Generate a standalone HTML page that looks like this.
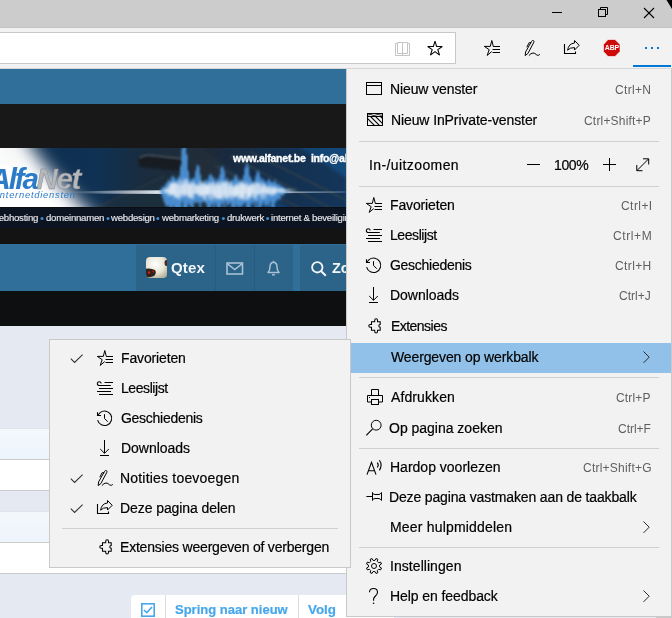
<!DOCTYPE html>
<html><head><meta charset="utf-8">
<style>
*{box-sizing:border-box}
html,body{margin:0;padding:0}
body{width:672px;height:618px;overflow:hidden;position:relative;background:#e4e9f2;font-family:"Liberation Sans",sans-serif}
.a{position:absolute}
.mt{position:absolute;font-size:14px;color:#1b1b1b;white-space:nowrap;line-height:16px;will-change:transform;-webkit-text-stroke:0.2px currentColor}
.sc{position:absolute;font-size:12px;color:#5f5f5f;white-space:nowrap;line-height:14px;will-change:transform}
.a{will-change:auto}
.t{will-change:transform}
svg{position:absolute;overflow:visible}
</style></head><body>
<div class="a" style="left:0;top:0;width:672px;height:27px;background:#cccccc"></div>
<div class="a" style="left:0;top:27px;width:672px;height:1px;background:#c4c4c4"></div>
<svg style="left:0;top:0" width="672" height="28">
  <polygon points="666.5,0 672,0 672,9" fill="#000"/>
  <line x1="552" y1="12.5" x2="562" y2="12.5" stroke="#000" stroke-width="1"/>
  <rect x="598.5" y="9.5" width="7" height="7" fill="none" stroke="#000" stroke-width="1"/>
  <polyline points="600.5,9.5 600.5,7.5 607.5,7.5 607.5,14.5 605.5,14.5" fill="none" stroke="#000" stroke-width="1"/>
  <line x1="644" y1="8" x2="654" y2="18" stroke="#000" stroke-width="1.1"/>
  <line x1="654" y1="8" x2="644" y2="18" stroke="#000" stroke-width="1.1"/>
</svg>
<div class="a" style="left:0;top:28px;width:672px;height:41px;background:#f2f2f2"></div>
<div class="a" style="left:0;top:68px;width:672px;height:1px;background:#d6d6d6"></div>
<div class="a" style="left:-2px;top:32px;width:458px;height:32px;background:#fff;border:1px solid #c8c8c8"></div>
<div class="a" style="left:633px;top:65px;width:38px;height:2px;background:#0078d7"></div>
<svg style="left:0;top:28px" width="672" height="41">
<g fill="none" stroke="#c4c4c4" stroke-width="1"><path d="M395.5,15.5 V27.5 H409.5 V15.5 H407.5 M395.5,15.5 H397.5"/><path d="M397.5,25.5 V14.5 H402.5 V27.5 M402.5,14.5 H407.5 V25.5 H397.5"/></g>
<path d="M435,13.2 L436.6,18.5 L442.3,18.5 L437.8,21.6 L439.6,27.1 L435,23.7 L430.4,27.1 L432.2,21.6 L427.7,18.5 L433.4,18.5 Z" fill="none" stroke="#000" stroke-width="1.05" stroke-miterlimit="3"/>
</svg>
<svg style="left:484px;top:40px" width="16" height="16"><path d="M7.8,0.5 L6.3,6.4 L0.3,6.4 L5.2,9.7 L3.2,15.4 L7.7,11.6 M7.8,0.5 L9.3,6.4" fill="none" stroke="#000" stroke-width="1" stroke-linejoin="miter"/>
<path d="M9.2,6.5 H16 M8.5,9.5 H16 M8.5,12.5 H16" stroke="#000" stroke-width="1"/></svg>
<svg style="left:524px;top:40px" width="16" height="16"><path d="M1.2,15.6 L1.6,11.9 L7.6,1.3 Q8.6,-0.2 9.7,0.8 Q10.4,1.7 9.6,2.8 L3.8,13.6 Z" fill="none" stroke="#000" stroke-width="1"/>
<path d="M2.8,7.2 L5.2,2.6 L7.2,2.9" fill="none" stroke="#000" stroke-width="1"/>
<path d="M4.9,15.6 Q7,13 9,13 Q11,13 12.5,14.8 Q14.5,16.2 15.8,14.4" fill="none" stroke="#000" stroke-width="1"/></svg>
<svg style="left:564px;top:40px" width="16" height="16"><path d="M0.5,4 V13.5 H11.5 V11.5" fill="none" stroke="#000" stroke-width="1.1"/>
<path d="M10.5,0.5 L15.2,5.3 L10.5,10 V7.6 Q6,7.4 3.6,10.2 Q4.6,3.5 10.5,3 Z" fill="none" stroke="#000" stroke-width="1" stroke-linejoin="miter"/></svg>
<svg style="left:603px;top:39px;will-change:transform" width="18" height="18">
<polygon points="5,0.5 12,0.5 17,5.5 17,12.5 12,17.5 5,17.5 0.5,12.5 0.5,5.5" fill="#cf0a0a" stroke="#fff" stroke-width="0.6"/>
<text x="8.9" y="11.1" font-family="Liberation Sans" font-weight="bold" font-size="7" letter-spacing="-0.2" fill="#fff" text-anchor="middle">ABP</text>
</svg>
<svg style="left:640px;top:44px" width="24" height="8">
<rect x="5" y="3" width="2" height="2" fill="#0078d7"/><rect x="11" y="3" width="2" height="2" fill="#0078d7"/><rect x="17" y="3" width="2" height="2" fill="#0078d7"/>
</svg>
<div class="a" style="left:0;top:69px;width:346px;height:35px;background:#2f6f99"></div>
<div class="a" style="left:0;top:104px;width:346px;height:44px;background:#181818"></div>
<svg style="left:0;top:148px;overflow:hidden;will-change:transform" width="346" height="60">
<defs>
<linearGradient id="bg1" x1="0" x2="1" y1="0" y2="0">
<stop offset="0" stop-color="#0c2c4e"/><stop offset="0.28" stop-color="#0f3153"/><stop offset="0.42" stop-color="#1a2c3e"/><stop offset="0.6" stop-color="#222d38"/><stop offset="0.8" stop-color="#123d66"/><stop offset="1" stop-color="#134a7c"/>
</linearGradient>
<filter id="bl4" x="-50%" y="-50%" width="200%" height="200%"><feGaussianBlur stdDeviation="9"/></filter>
<filter id="bl2" x="-50%" y="-50%" width="200%" height="200%"><feGaussianBlur stdDeviation="1.6"/></filter>
<filter id="bl1" x="-50%" y="-50%" width="200%" height="200%"><feGaussianBlur stdDeviation="0.8"/></filter>
<filter id="blh" x="-50%" y="-50%" width="200%" height="200%"><feGaussianBlur stdDeviation="2.5 0.6"/></filter><filter id="wb" x="-20%" y="-50%" width="140%" height="200%"><feGaussianBlur stdDeviation="1.3 1.8"/></filter><filter id="ww" x="-20%" y="-50%" width="140%" height="200%"><feGaussianBlur stdDeviation="1.6 1.5"/></filter>
</defs>
<rect width="346" height="60" fill="url(#bg1)"/>
<!-- dark device shapes -->
<g filter="url(#bl1)">
<path d="M92,60 L160,27 L215,28 L215,60 Z" fill="#1f2c3a" opacity="0.7"/><path d="M100,58 L165,28" stroke="#3b4858" stroke-width="1" opacity="0.6"/>
<path d="M138,13 Q138,7 146,6.5 L186,10 L190,24 L146,19.5 Q138,19 138,13 Z" fill="#181d23"/>
<path d="M139.5,10 Q143,6.5 152,7.3 L186,11" stroke="#4b5663" stroke-width="1.3" fill="none"/>
<path d="M205,0 L300,0 L346,30 L346,60 L290,60 L240,30 Z" fill="#1a2635" opacity="0.5"/>
<path d="M230,8 L330,60 M250,4 L346,52 M215,18 L300,60" stroke="#34404d" stroke-width="2" fill="none" opacity="0.6"/>
</g>
<!-- glow at left -->
<g filter="url(#bl4)">
<path d="M-30,-20 L20,-20 Q38,18 108,82 L-30,82 Z" fill="#ffffff"/>
</g>
<rect x="0" y="0" width="20" height="12" fill="#c8ccd2" opacity="0.35" filter="url(#bl4)"/>
<!-- white streak -->
<linearGradient id="stg" x1="70" x2="346" y1="0" y2="0" gradientUnits="userSpaceOnUse"><stop offset="0" stop-color="#dfe6ee" stop-opacity="0"/><stop offset="0.12" stop-color="#dfe6ee" stop-opacity="0.45"/><stop offset="0.32" stop-color="#e8edf2" stop-opacity="0.95"/><stop offset="0.75" stop-color="#dfe6ee" stop-opacity="0.7"/><stop offset="1" stop-color="#c9d6e3" stop-opacity="0.4"/></linearGradient>
<g filter="url(#blh)">
<path d="M70,43.5 Q160,41.5 240,43 Q300,43.6 346,43.6 L346,44.6 Q300,44.8 240,45.5 Q160,46.5 70,45 Z" fill="url(#stg)"/>
</g>
<g filter="url(#wb)" fill="#4c93da"><rect x="159.0" y="42.3" width="1.6" height="0.6"/><rect x="160.5" y="41.1" width="1.6" height="4.5"/><rect x="162.0" y="38.8" width="1.6" height="11.1"/><rect x="163.5" y="38.9" width="1.6" height="15.2"/><rect x="165.0" y="36.1" width="1.6" height="21.8"/><rect x="166.5" y="34.4" width="1.6" height="23.8"/><rect x="168.0" y="31.7" width="1.6" height="26.2"/><rect x="169.5" y="33.3" width="1.6" height="28.6"/><rect x="171.0" y="28.9" width="1.6" height="33.9"/><rect x="172.5" y="28.1" width="1.6" height="29.7"/><rect x="174.0" y="30.2" width="1.6" height="30.3"/><rect x="175.5" y="32.4" width="1.6" height="28.4"/><rect x="177.0" y="30.6" width="1.6" height="32.9"/><rect x="178.5" y="28.2" width="1.6" height="32.0"/><rect x="180.0" y="17.9" width="1.6" height="42.6"/><rect x="181.5" y="0.4" width="1.6" height="53.5"/><rect x="183.0" y="-14.1" width="1.6" height="76.8"/><rect x="184.5" y="-11.5" width="1.6" height="73.7"/><rect x="186.0" y="6.4" width="1.6" height="56.4"/><rect x="187.5" y="22.7" width="1.6" height="33.1"/><rect x="189.0" y="31.7" width="1.6" height="26.2"/><rect x="190.5" y="31.7" width="1.6" height="27.2"/><rect x="192.0" y="30.2" width="1.6" height="31.5"/><rect x="193.5" y="29.8" width="1.6" height="24.6"/><rect x="195.0" y="22.6" width="1.6" height="32.5"/><rect x="196.5" y="17.1" width="1.6" height="37.3"/><rect x="198.0" y="18.1" width="1.6" height="36.8"/><rect x="199.5" y="26.5" width="1.6" height="36.0"/><rect x="201.0" y="34.5" width="1.6" height="20.0"/><rect x="202.5" y="35.4" width="1.6" height="18.2"/><rect x="204.0" y="32.7" width="1.6" height="20.9"/><rect x="205.5" y="31.6" width="1.6" height="24.5"/><rect x="207.0" y="32.8" width="1.6" height="28.9"/><rect x="208.5" y="27.4" width="1.6" height="35.1"/><rect x="210.0" y="26.0" width="1.6" height="32.9"/><rect x="211.5" y="28.4" width="1.6" height="27.7"/><rect x="213.0" y="29.9" width="1.6" height="34.0"/><rect x="214.5" y="34.9" width="1.6" height="20.5"/><rect x="216.0" y="30.6" width="1.6" height="27.9"/><rect x="217.5" y="31.9" width="1.6" height="31.2"/><rect x="219.0" y="27.1" width="1.6" height="34.7"/><rect x="220.5" y="19.5" width="1.6" height="38.1"/><rect x="222.0" y="18.6" width="1.6" height="36.4"/><rect x="223.5" y="23.4" width="1.6" height="40.4"/><rect x="225.0" y="32.5" width="1.6" height="21.0"/><rect x="226.5" y="30.0" width="1.6" height="28.0"/><rect x="228.0" y="34.7" width="1.6" height="21.7"/><rect x="229.5" y="33.6" width="1.6" height="21.1"/><rect x="231.0" y="32.4" width="1.6" height="30.6"/><rect x="232.5" y="32.1" width="1.6" height="26.9"/><rect x="234.0" y="28.4" width="1.6" height="33.6"/><rect x="235.5" y="26.8" width="1.6" height="30.0"/><rect x="237.0" y="30.9" width="1.6" height="28.4"/><rect x="238.5" y="32.9" width="1.6" height="26.4"/><rect x="240.0" y="32.2" width="1.6" height="26.5"/><rect x="241.5" y="32.8" width="1.6" height="25.7"/><rect x="243.0" y="27.2" width="1.6" height="28.9"/><rect x="244.5" y="19.4" width="1.6" height="35.2"/><rect x="246.0" y="15.2" width="1.6" height="45.3"/><rect x="247.5" y="18.6" width="1.6" height="41.9"/><rect x="249.0" y="28.2" width="1.6" height="35.4"/><rect x="250.5" y="30.7" width="1.6" height="24.4"/><rect x="252.0" y="35.1" width="1.6" height="21.6"/><rect x="253.5" y="33.4" width="1.6" height="20.1"/><rect x="255.0" y="28.1" width="1.6" height="35.8"/><rect x="256.5" y="23.3" width="1.6" height="30.4"/><rect x="258.0" y="24.1" width="1.6" height="39.1"/><rect x="259.5" y="29.1" width="1.6" height="30.4"/><rect x="261.0" y="31.7" width="1.6" height="26.2"/><rect x="262.5" y="30.9" width="1.6" height="23.3"/><rect x="264.0" y="33.3" width="1.6" height="23.6"/><rect x="265.5" y="35.0" width="1.6" height="24.0"/><rect x="267.0" y="32.0" width="1.6" height="23.5"/><rect x="268.5" y="31.1" width="1.6" height="27.6"/><rect x="270.0" y="33.9" width="1.6" height="19.3"/><rect x="271.5" y="33.8" width="1.6" height="28.2"/><rect x="273.0" y="34.3" width="1.6" height="25.4"/><rect x="274.5" y="32.3" width="1.6" height="21.6"/><rect x="276.0" y="36.3" width="1.6" height="16.4"/><rect x="277.5" y="35.8" width="1.6" height="14.9"/><rect x="279.0" y="36.5" width="1.6" height="15.1"/><rect x="280.5" y="38.8" width="1.6" height="8.7"/><rect x="282.0" y="38.7" width="1.6" height="8.9"/><rect x="283.5" y="40.7" width="1.6" height="4.1"/><rect x="285.0" y="41.5" width="1.6" height="3.1"/><rect x="286.5" y="41.9" width="1.6" height="1.4"/><rect x="288.0" y="42.3" width="1.6" height="0.6"/></g><g filter="url(#ww)" fill="#eef2f7"><rect x="162.0" y="42.0" width="1.6" height="0.9" opacity="0.99"/><rect x="163.5" y="41.4" width="1.6" height="1.9" opacity="0.78"/><rect x="165.0" y="40.8" width="1.6" height="4.4" opacity="0.91"/><rect x="166.5" y="40.3" width="1.6" height="4.1" opacity="0.80"/><rect x="168.0" y="38.5" width="1.6" height="9.2" opacity="0.86"/><rect x="169.5" y="35.7" width="1.6" height="11.0" opacity="0.89"/><rect x="171.0" y="34.8" width="1.6" height="12.6" opacity="1.00"/><rect x="172.5" y="34.5" width="1.6" height="12.1" opacity="0.87"/><rect x="174.0" y="34.4" width="1.6" height="15.1" opacity="0.97"/><rect x="175.5" y="35.3" width="1.6" height="14.2" opacity="0.86"/><rect x="177.0" y="35.9" width="1.6" height="14.3" opacity="0.77"/><rect x="178.5" y="32.3" width="1.6" height="19.0" opacity="0.82"/><rect x="180.0" y="37.3" width="1.6" height="11.4" opacity="0.79"/><rect x="181.5" y="32.0" width="1.6" height="14.4" opacity="0.81"/><rect x="183.0" y="35.6" width="1.6" height="13.1" opacity="0.89"/><rect x="184.5" y="31.0" width="1.6" height="16.5" opacity="0.85"/><rect x="186.0" y="31.1" width="1.6" height="15.4" opacity="0.79"/><rect x="187.5" y="34.9" width="1.6" height="14.8" opacity="0.82"/><rect x="189.0" y="36.2" width="1.6" height="13.2" opacity="0.99"/><rect x="190.5" y="35.1" width="1.6" height="15.1" opacity="0.76"/><rect x="192.0" y="33.7" width="1.6" height="17.4" opacity="0.85"/><rect x="193.5" y="35.2" width="1.6" height="10.8" opacity="0.77"/><rect x="195.0" y="37.0" width="1.6" height="8.9" opacity="0.75"/><rect x="196.5" y="36.8" width="1.6" height="8.9" opacity="0.97"/><rect x="198.0" y="37.5" width="1.6" height="10.4" opacity="0.84"/><rect x="199.5" y="33.0" width="1.6" height="15.7" opacity="0.87"/><rect x="201.0" y="36.9" width="1.6" height="10.4" opacity="0.96"/><rect x="202.5" y="33.3" width="1.6" height="15.9" opacity="0.79"/><rect x="204.0" y="35.8" width="1.6" height="16.5" opacity="0.97"/><rect x="205.5" y="36.8" width="1.6" height="9.9" opacity="0.94"/><rect x="207.0" y="37.0" width="1.6" height="10.0" opacity="0.95"/><rect x="208.5" y="34.2" width="1.6" height="17.1" opacity="0.93"/><rect x="210.0" y="36.9" width="1.6" height="8.8" opacity="0.76"/><rect x="211.5" y="34.8" width="1.6" height="17.4" opacity="0.86"/><rect x="213.0" y="33.3" width="1.6" height="14.8" opacity="0.81"/><rect x="214.5" y="37.8" width="1.6" height="12.1" opacity="0.98"/><rect x="216.0" y="35.1" width="1.6" height="16.0" opacity="0.77"/><rect x="217.5" y="34.3" width="1.6" height="16.4" opacity="0.87"/><rect x="219.0" y="37.0" width="1.6" height="14.1" opacity="0.99"/><rect x="220.5" y="33.3" width="1.6" height="17.3" opacity="0.79"/><rect x="222.0" y="33.6" width="1.6" height="17.6" opacity="0.79"/><rect x="223.5" y="35.1" width="1.6" height="12.9" opacity="0.89"/><rect x="225.0" y="33.2" width="1.6" height="16.9" opacity="0.88"/><rect x="226.5" y="33.8" width="1.6" height="17.5" opacity="0.80"/><rect x="228.0" y="37.6" width="1.6" height="12.0" opacity="0.81"/><rect x="229.5" y="33.5" width="1.6" height="14.4" opacity="0.86"/><rect x="231.0" y="36.5" width="1.6" height="15.4" opacity="0.88"/><rect x="232.5" y="38.9" width="1.6" height="9.7" opacity="0.80"/><rect x="234.0" y="38.0" width="1.6" height="10.8" opacity="0.93"/><rect x="235.5" y="35.9" width="1.6" height="13.5" opacity="0.95"/><rect x="237.0" y="37.5" width="1.6" height="9.9" opacity="0.94"/><rect x="238.5" y="34.4" width="1.6" height="17.4" opacity="0.86"/><rect x="240.0" y="35.9" width="1.6" height="14.4" opacity="0.86"/><rect x="241.5" y="33.4" width="1.6" height="17.0" opacity="0.97"/><rect x="243.0" y="35.6" width="1.6" height="16.5" opacity="0.96"/><rect x="244.5" y="36.3" width="1.6" height="9.7" opacity="0.81"/><rect x="246.0" y="34.3" width="1.6" height="17.5" opacity="0.79"/><rect x="247.5" y="38.1" width="1.6" height="13.5" opacity="0.99"/><rect x="249.0" y="36.6" width="1.6" height="12.3" opacity="1.00"/><rect x="250.5" y="36.4" width="1.6" height="12.7" opacity="0.83"/><rect x="252.0" y="34.7" width="1.6" height="10.9" opacity="0.89"/><rect x="253.5" y="37.1" width="1.6" height="12.7" opacity="0.88"/><rect x="255.0" y="34.5" width="1.6" height="17.5" opacity="0.78"/><rect x="256.5" y="34.7" width="1.6" height="12.5" opacity="0.78"/><rect x="258.0" y="34.7" width="1.6" height="12.3" opacity="0.79"/><rect x="259.5" y="35.5" width="1.6" height="10.3" opacity="0.76"/><rect x="261.0" y="39.1" width="1.6" height="11.8" opacity="0.91"/><rect x="262.5" y="35.2" width="1.6" height="10.2" opacity="0.97"/><rect x="264.0" y="37.0" width="1.6" height="13.2" opacity="0.82"/><rect x="265.5" y="38.7" width="1.6" height="6.7" opacity="0.79"/><rect x="267.0" y="38.6" width="1.6" height="7.7" opacity="0.94"/><rect x="268.5" y="39.3" width="1.6" height="6.9" opacity="0.75"/><rect x="270.0" y="37.4" width="1.6" height="9.6" opacity="0.80"/><rect x="271.5" y="40.0" width="1.6" height="7.8" opacity="0.86"/><rect x="273.0" y="39.2" width="1.6" height="6.9" opacity="0.92"/><rect x="274.5" y="38.1" width="1.6" height="8.5" opacity="0.91"/><rect x="276.0" y="40.7" width="1.6" height="3.6" opacity="0.77"/><rect x="277.5" y="40.6" width="1.6" height="3.4" opacity="0.96"/><rect x="279.0" y="40.5" width="1.6" height="3.8" opacity="0.82"/><rect x="280.5" y="40.4" width="1.6" height="3.7" opacity="0.99"/><rect x="282.0" y="41.0" width="1.6" height="4.4" opacity="0.83"/><rect x="283.5" y="41.0" width="1.6" height="3.1" opacity="0.88"/><rect x="285.0" y="41.7" width="1.6" height="1.8" opacity="0.77"/><rect x="286.5" y="41.8" width="1.6" height="1.6" opacity="0.81"/><rect x="288.0" y="41.3" width="1.6" height="2.3" opacity="0.93"/><rect x="289.5" y="41.9" width="1.6" height="1.7" opacity="0.79"/><rect x="291.0" y="42.2" width="1.6" height="1.1" opacity="0.97"/><rect x="292.5" y="42.0" width="1.6" height="0.8" opacity="0.88"/><rect x="294.0" y="42.2" width="1.6" height="0.7" opacity="0.90"/></g>
<!-- logo -->
<text x="-10.5" y="41" font-family="Liberation Sans" font-weight="bold" font-style="italic" font-size="29.5" letter-spacing="-2.1" fill="#2b7bc9">Alfa</text><text x="36.5" y="41" font-family="Liberation Sans" font-weight="bold" font-style="italic" font-size="29.5" letter-spacing="-1.3" fill="#b5b7ba" stroke="#7d8088" stroke-width="0.4">Net</text>
<text x="-3" y="49.6" font-family="Liberation Sans" font-style="italic" font-size="9.4" letter-spacing="0.75" fill="#2b7bc9">internetdiensten</text>
<text x="233" y="13.8" font-family="Liberation Sans" font-weight="bold" font-size="10.5" letter-spacing="-0.25" fill="#fff" stroke="#fff" stroke-width="0.35" xml:space="preserve">www.alfanet.be  info@alfanet.be</text>
<rect y="59" width="346" height="1" fill="#0a0d12"/>
</svg>
<div class="a" style="left:0;top:208px;width:346px;height:20px;background:#0c1422"></div>
<div class="a" style="left:0;top:228px;width:346px;height:16px;background:#131313"></div>
<div class="a" style="left:0;top:244px;width:346px;height:47px;background:#2f6f99"></div>
<div class="a" style="left:0;top:291px;width:346px;height:35px;background:#0e0f11"></div>
<div class="a" style="left:-7.8px;top:212px;font-size:9.6px;letter-spacing:-0.24px;line-height:12px;color:#e6e8ea;white-space:nowrap;will-change:transform;-webkit-text-stroke:0.15px currentColor">webhosting</div>
<div class="a" style="left:46px;top:212px;font-size:9.6px;letter-spacing:-0.24px;line-height:12px;color:#e6e8ea;white-space:nowrap;will-change:transform;-webkit-text-stroke:0.15px currentColor">domeinnamen</div>
<div class="a" style="left:111px;top:212px;font-size:9.6px;letter-spacing:-0.24px;line-height:12px;color:#e6e8ea;white-space:nowrap;will-change:transform;-webkit-text-stroke:0.15px currentColor">webdesign</div>
<div class="a" style="left:162.2px;top:212px;font-size:9.6px;letter-spacing:-0.24px;line-height:12px;color:#e6e8ea;white-space:nowrap;will-change:transform;-webkit-text-stroke:0.15px currentColor">webmarketing</div>
<div class="a" style="left:227px;top:212px;font-size:9.6px;letter-spacing:-0.24px;line-height:12px;color:#e6e8ea;white-space:nowrap;will-change:transform;-webkit-text-stroke:0.15px currentColor">drukwerk</div>
<div class="a" style="left:271.3px;top:212px;font-size:9.6px;letter-spacing:-0.24px;line-height:12px;color:#e6e8ea;white-space:nowrap;will-change:transform;-webkit-text-stroke:0.15px currentColor">internet &amp; beveiliging</div>
<svg style="left:0;top:208px" width="346" height="20"><circle cx="42" cy="10.6" r="1.5" fill="#3d8fd6"/><circle cx="108" cy="10.6" r="1.5" fill="#3d8fd6"/><circle cx="157.8" cy="10.6" r="1.5" fill="#3d8fd6"/><circle cx="223.4" cy="10.6" r="1.5" fill="#3d8fd6"/><circle cx="267.6" cy="10.6" r="1.5" fill="#3d8fd6"/></svg>
<div class="a" style="left:136px;top:245px;width:157px;height:46px;background:#2c6389;border-radius:3px 3px 0 0"></div>
<div class="a" style="left:215px;top:245px;width:1px;height:46px;background:#285b80"></div>
<div class="a" style="left:254px;top:245px;width:1px;height:46px;background:#285b80"></div>
<div class="a" style="left:300px;top:245px;width:60px;height:46px;background:#2c6389;border-radius:3px 3px 0 0"></div>
<svg style="left:146px;top:257px" width="21" height="21">
<defs><clipPath id="av"><rect width="21" height="21" rx="4"/></clipPath><radialGradient id="avg" cx="0.45" cy="0.35" r="0.7"><stop offset="0" stop-color="#ffffff"/><stop offset="0.6" stop-color="#e9e6d8"/><stop offset="1" stop-color="#b8b29a"/></radialGradient></defs>
<g clip-path="url(#av)"><rect width="21" height="21" fill="url(#avg)"/><path d="M-1,12 Q4,10.5 9,13 Q11,16 8,19 Q3,21 -1,20 Z" fill="#2e241c"/><circle cx="3" cy="15.5" r="1.2" fill="#e01818"/><circle cx="7.2" cy="14.6" r="1" fill="#c01010"/><ellipse cx="20.5" cy="6" rx="2" ry="3" fill="#3a2a20"/><circle cx="19.8" cy="6.5" r="0.7" fill="#c01010"/></g>
</svg>
<div class="a" style="left:171px;top:260px;font-size:15px;letter-spacing:0.2px;line-height:16px;font-weight:bold;color:#f2f6fa;white-space:nowrap;will-change:transform">Qtex</div>
<svg style="left:226px;top:262px" width="18" height="13"><rect x="1" y="1" width="15.5" height="11" fill="none" stroke="#a9c1d6" stroke-width="1.6"/><path d="M1.5,1.8 L8.75,7.5 L16,1.8" fill="none" stroke="#a9c1d6" stroke-width="1.5"/></svg>
<svg style="left:266px;top:260px" width="16" height="17"><path d="M2,12.5 Q4,10.5 4,7 Q4,2.5 7.5,2.2 Q11,2.5 11,7 Q11,10.5 13,12.5 Z" fill="none" stroke="#a9c1d6" stroke-width="1.5" stroke-linejoin="round"/><path d="M7.5,0.8 V2" stroke="#a9c1d6" stroke-width="1.4"/><path d="M6,14.8 H9" stroke="#a9c1d6" stroke-width="1.4"/></svg>
<svg style="left:311px;top:261px" width="17" height="16"><circle cx="6.3" cy="6.3" r="5.2" fill="none" stroke="#f4f7fa" stroke-width="1.8"/><path d="M10,10 L14.8,14.8" stroke="#f4f7fa" stroke-width="2"/></svg>
<div class="a" style="left:332px;top:260px;font-size:14.5px;line-height:16px;font-weight:bold;color:#f2f6fa;white-space:nowrap;will-change:transform">Zoeken</div>
<div class="a" style="left:0;top:428px;width:346px;height:1px;background:#dfe3ea"></div>
<div class="a" style="left:0;top:429px;width:346px;height:30px;background:linear-gradient(#f4f8fc,#edf4fc)"></div>
<div class="a" style="left:0;top:459px;width:346px;height:1px;background:#cbcbcb"></div>
<div class="a" style="left:0;top:460px;width:346px;height:30px;background:#fff"></div>
<div class="a" style="left:0;top:490px;width:346px;height:1px;background:#cbcbcb"></div>
<div class="a" style="left:0;top:511px;width:346px;height:1px;background:#dfe3ea"></div>
<div class="a" style="left:0;top:512px;width:346px;height:30px;background:linear-gradient(#f4f8fc,#edf4fc)"></div>
<div class="a" style="left:0;top:542px;width:346px;height:1px;background:#cbcbcb"></div>
<div class="a" style="left:0;top:543px;width:346px;height:30px;background:#fff"></div>
<div class="a" style="left:0;top:573px;width:346px;height:1px;background:#cbcbcb"></div>
<div class="a" style="left:131px;top:595px;width:220px;height:30px;background:#fff;border-radius:4px 4px 0 0"></div>
<div class="a" style="left:165px;top:595px;width:1px;height:30px;background:#dcdcdc"></div>
<div class="a" style="left:298px;top:595px;width:1px;height:30px;background:#dcdcdc"></div>
<svg style="left:141px;top:603px" width="14" height="14"><rect x="0.8" y="0.8" width="12.4" height="12.4" fill="none" stroke="#47a7eb" stroke-width="1.6"/><path d="M3,7 L5.8,9.6 L11,4" fill="none" stroke="#47a7eb" stroke-width="1.6"/></svg>
<div class="mt" style="left:175px;top:602px;font-size:13px;font-weight:bold;color:#47a7eb">Spring naar nieuw</div>
<div class="mt" style="left:308px;top:602px;font-size:13.4px;font-weight:bold;color:#47a7eb">Volg</div>
<div class="a" style="left:346px;top:69px;width:326px;height:548px;background:#f2f2f2;border:1px solid #c9c9c9;border-top:none"></div>
<div class="a" style="left:351px;top:343px;width:320px;height:30px;background:#91c1e8"></div>
<div class="a" style="left:359px;top:141px;width:300px;height:1px;background:#d0d0d0"></div>
<div class="a" style="left:359px;top:186px;width:300px;height:1px;background:#d0d0d0"></div>
<div class="a" style="left:359px;top:377px;width:300px;height:1px;background:#d0d0d0"></div>
<div class="a" style="left:359px;top:448px;width:300px;height:1px;background:#d0d0d0"></div>
<div class="a" style="left:359px;top:547px;width:300px;height:1px;background:#d0d0d0"></div>
<svg style="left:366px;top:82px" width="16" height="13"><rect x="0.5" y="0.5" width="15" height="12" fill="none" stroke="#000"/><path d="M0.5,3.5 H15.5" stroke="#000"/></svg>
<svg style="left:367px;top:113px" width="16" height="13">
<defs><clipPath id="cp"><rect x="1" y="4" width="14" height="8"/></clipPath></defs>
<rect x="0.5" y="0.5" width="15" height="12" fill="none" stroke="#000"/><path d="M0.5,3.5 H15.5" stroke="#000"/>
<path d="M1,2 Q3,0.8 5,2 Q7,3 9,2 Q11,0.8 13,2 Q14,2.5 15,2" fill="none" stroke="#000" stroke-width="0.8"/>
<g clip-path="url(#cp)" stroke="#000" stroke-width="1.1"><path d="M-2,3 L8,13 M3,3 L13,13 M8,3 L18,13 M13,3 L23,13"/></g>
</svg>
<div class="mt" style="left:389.70px;top:81.15px;font-size:14px;color:#000;letter-spacing:-0.108px;">Nieuw venster</div>
<div class="mt" style="left:390.70px;top:112.15px;font-size:14px;color:#000;letter-spacing:-0.109px;">Nieuw InPrivate-venster</div>
<div class="mt" style="left:389.70px;top:197.15px;font-size:14px;color:#000;letter-spacing:-0.144px;">Favorieten</div>
<svg style="left:366px;top:197px" width="16" height="16"><path d="M7.8,0.5 L6.3,6.4 L0.3,6.4 L5.2,9.7 L3.2,15.4 L7.7,11.6 M7.8,0.5 L9.3,6.4" fill="none" stroke="#000" stroke-width="1" stroke-linejoin="miter"/>
<path d="M9.2,6.5 H16 M8.5,9.5 H16 M8.5,12.5 H16" stroke="#000" stroke-width="1"/></svg>
<div class="mt" style="left:390.00px;top:227.15px;font-size:14px;color:#000;letter-spacing:-0.425px;">Leeslijst</div>
<svg style="left:366px;top:227px" width="16" height="16"><path d="M4.1,3.6 A1.9,1.9 0 1 0 2.3,5.5 H13.8" fill="none" stroke="#000" stroke-width="1.05"/>
<path d="M7.5,2.5 H16 M2,8.5 H16 M0,11.5 H14 M2,14.5 H16" stroke="#000" stroke-width="1"/></svg>
<div class="mt" style="left:389.50px;top:257.15px;font-size:14px;color:#000;letter-spacing:-0.282px;">Geschiedenis</div>
<svg style="left:366px;top:257px" width="16" height="16"><path d="M0.6,10.2 A7.2,7.2 0 1 0 3.1,2.6 L0.9,5" fill="none" stroke="#000" stroke-width="1.05"/>
<path d="M0.5,2.2 V5.5 H4" fill="none" stroke="#000" stroke-width="1.1"/><path d="M0,5.8 L0,3.5 L2.3,5.8 Z" fill="#000"/>
<path d="M7.5,4.2 V8.5 L10.8,11.7" fill="none" stroke="#000" stroke-width="1"/></svg>
<div class="mt" style="left:390.00px;top:287.15px;font-size:14px;color:#000;letter-spacing:-0.038px;">Downloads</div>
<svg style="left:366px;top:287px" width="16" height="16"><path d="M7.5,0 V13.2 M3.2,9 L7.5,13.3 L11.8,9 M3,15.5 H12" fill="none" stroke="#000" stroke-width="1"/></svg>
<div class="mt" style="left:390.90px;top:318.15px;font-size:14px;color:#000;letter-spacing:-0.537px;">Extensies</div>
<svg style="left:366px;top:318px" width="16" height="16"><path d="M5.5,3.7 H8.7 V2.2 A1.4,1.4 0 0 1 11.5,2.2 V3.7 H14.2 V6.4 A1.4,1.4 0 0 0 14.2,9.2 V12.3 H11.5 V13.6 A1.4,1.4 0 0 1 8.7,13.6 V12.3 H5.5 V9.2 H4.2 A1.4,1.4 0 0 1 4.2,6.4 H5.5 Z" fill="none" stroke="#000" stroke-width="1.05"/></svg>
<div class="mt" style="left:390.50px;top:349.15px;font-size:14px;color:#000;letter-spacing:-0.125px;">Weergeven op werkbalk</div>
<div class="mt" style="left:391.20px;top:389.15px;font-size:14px;color:#000;letter-spacing:0.1px;">Afdrukken</div>
<svg style="left:366px;top:389px" width="16" height="16"><path d="M5.5,6 V0.5 H12.5 V6" fill="none" stroke="#000" stroke-width="1"/>
<path d="M5,13 H1.5 V6.5 H16.5 V13 H13" fill="none" stroke="#000" stroke-width="1"/>
<rect x="5.5" y="10.5" width="7" height="5" fill="none" stroke="#000" stroke-width="1"/>
<rect x="3" y="8" width="1" height="1" fill="#000"/></svg>
<div class="mt" style="left:389.20px;top:420.15px;font-size:14px;color:#000;letter-spacing:-0.013px;">Op pagina zoeken</div>
<svg style="left:366px;top:420px" width="16" height="16"><circle cx="10.2" cy="5.2" r="4.9" fill="none" stroke="#000" stroke-width="1"/>
<path d="M6.6,8.8 L0.3,15.3" stroke="#000" stroke-width="1.1"/></svg>
<div class="mt" style="left:390.00px;top:459.15px;font-size:14px;color:#000;letter-spacing:0.0px;">Hardop voorlezen</div>
<svg style="left:366px;top:460px" width="16" height="16"><path d="M1,14.6 L5.5,2.3 L10,14.6 M2.6,10.8 H8.4" fill="none" stroke="#000" stroke-width="1.1"/>
<path d="M11.3,2.7 Q13.2,5 11.3,7.5 M13.4,0.3 Q16.8,5 13.4,10.4" fill="none" stroke="#000" stroke-width="1.1"/></svg>
<div class="mt" style="left:389.40px;top:489.15px;font-size:14px;color:#000;letter-spacing:-0.147px;">Deze pagina vastmaken aan de taakbalk</div>
<svg style="left:366px;top:492px" width="16" height="16"><path d="M0.4,4.5 H6.5 M6.5,0.2 V8.7" fill="none" stroke="#000" stroke-width="1"/>
<path d="M6.5,1.5 Q8.5,2.5 9,2.5 H13 Q14.5,2 15.5,0.5 V8.5 Q14.5,7 13,6.5 H9 Q8.5,6.5 6.5,7.5" fill="none" stroke="#000" stroke-width="1"/></svg>
<div class="mt" style="left:390.00px;top:519.15px;font-size:14px;color:#000;letter-spacing:0.181px;">Meer hulpmiddelen</div>
<div class="mt" style="left:390.00px;top:558.15px;font-size:14px;color:#000;letter-spacing:0.055px;">Instellingen</div>
<svg style="left:366px;top:558px" width="16" height="16"><path d="M15.44,9.97 L14.66,11.87 L12.53,11.29 L11.29,12.53 L11.87,14.66 L9.97,15.44 L8.88,13.53 L7.12,13.53 L6.03,15.44 L4.13,14.66 L4.71,12.53 L3.47,11.29 L1.34,11.87 L0.56,9.97 L2.47,8.88 L2.47,7.12 L0.56,6.03 L1.34,4.13 L3.47,4.71 L4.71,3.47 L4.13,1.34 L6.03,0.56 L7.12,2.47 L8.88,2.47 L9.97,0.56 L11.87,1.34 L11.29,3.47 L12.53,4.71 L14.66,4.13 L15.44,6.03 L13.53,7.12 L13.53,8.88 Z" fill="none" stroke="#000" stroke-width="1" stroke-linejoin="round"/><circle cx="8" cy="8" r="2.5" fill="none" stroke="#000" stroke-width="1"/></svg>
<div class="mt" style="left:390.00px;top:588.15px;font-size:14px;color:#000;letter-spacing:-0.08px;">Help en feedback</div>
<svg style="left:366px;top:588px" width="16" height="16"><path d="M3.4,4.3 Q3.8,0.5 7.5,0.5 Q11.5,0.5 11.5,4.2 Q11.5,6.2 9.5,8 Q7.6,9.8 7.6,11 V12.7" fill="none" stroke="#000" stroke-width="1.1"/>
<circle cx="7.55" cy="15.3" r="0.8" fill="#000"/></svg>
<div class="mt" style="left:368.50px;top:157.15px;font-size:14px;color:#000;letter-spacing:0.4px;">In-/uitzoomen</div>
<div class="sc" style="left:614.80px;top:83.00px;letter-spacing:0.32px">Ctrl+N</div>
<div class="sc" style="left:583.90px;top:114.00px;letter-spacing:0.191px">Ctrl+Shift+P</div>
<div class="sc" style="left:620.70px;top:199.00px;letter-spacing:0.44px">Ctrl+I</div>
<div class="sc" style="left:612.70px;top:229.00px;letter-spacing:0.6px">Ctrl+M</div>
<div class="sc" style="left:614.60px;top:259.00px;letter-spacing:0.38px">Ctrl+H</div>
<div class="sc" style="left:618.80px;top:289.00px;letter-spacing:0.04px">Ctrl+J</div>
<div class="sc" style="left:615.90px;top:391.00px;letter-spacing:0.16px">Ctrl+P</div>
<div class="sc" style="left:617.90px;top:422.00px;letter-spacing:-0.02px">Ctrl+F</div>
<div class="sc" style="left:582.80px;top:461.00px;letter-spacing:0.227px">Ctrl+Shift+G</div>
<svg style="left:520px;top:150px" width="140" height="30">
<path d="M7,14.5 H20" stroke="#000" stroke-width="1"/>
<path d="M83,14.5 H96 M89.5,8 V21" stroke="#000" stroke-width="1"/>
<path d="M117,20.5 L128.5,9 M123,8.8 H128.7 V14.5 M116.8,15 V20.7 H122.5" fill="none" stroke="#000" stroke-width="1"/>
</svg>
<div class="mt" style="left:554.00px;top:157.15px;font-size:14px;color:#000;letter-spacing:0px;letter-spacing:-0.4px">100%</div>
<svg style="left:642px;top:350px" width="10" height="14"><path d="M1.5,1.5 L7.2,7.2 L1.5,12.9" fill="none" stroke="#2a2a2a" stroke-width="1"/></svg>
<svg style="left:642px;top:520px" width="10" height="14"><path d="M1.5,1.5 L7.2,7.2 L1.5,12.9" fill="none" stroke="#2a2a2a" stroke-width="1"/></svg>
<svg style="left:642px;top:589px" width="10" height="14"><path d="M1.5,1.5 L7.2,7.2 L1.5,12.9" fill="none" stroke="#2a2a2a" stroke-width="1"/></svg>
<div class="a" style="left:346px;top:617px;width:48px;height:1px;background:#fff"></div><div class="a" style="left:656px;top:617px;width:16px;height:1px;background:#c9c9c9"></div>
<div class="a" style="left:49px;top:339px;width:302px;height:229px;background:#f2f2f2;border:1px solid #c9c9c9"></div>
<div class="a" style="left:62px;top:528px;width:276px;height:1px;background:#d0d0d0"></div>
<div class="mt" style="left:120.50px;top:350.15px;font-size:14px;color:#000;letter-spacing:-0.144px;">Favorieten</div>
<svg style="left:97px;top:350px" width="16" height="16"><path d="M7.8,0.5 L6.3,6.4 L0.3,6.4 L5.2,9.7 L3.2,15.4 L7.7,11.6 M7.8,0.5 L9.3,6.4" fill="none" stroke="#000" stroke-width="1" stroke-linejoin="miter"/>
<path d="M9.2,6.5 H16 M8.5,9.5 H16 M8.5,12.5 H16" stroke="#000" stroke-width="1"/></svg>
<svg style="left:70px;top:354px" width="14" height="10"><path d="M0.8,4.6 L4.6,8.4 L12.6,0.6" fill="none" stroke="#333" stroke-width="1.1"/></svg>
<div class="mt" style="left:120.50px;top:380.15px;font-size:14px;color:#000;letter-spacing:-0.425px;">Leeslijst</div>
<svg style="left:97px;top:380px" width="16" height="16"><path d="M4.1,3.6 A1.9,1.9 0 1 0 2.3,5.5 H13.8" fill="none" stroke="#000" stroke-width="1.05"/>
<path d="M7.5,2.5 H16 M2,8.5 H16 M0,11.5 H14 M2,14.5 H16" stroke="#000" stroke-width="1"/></svg>
<div class="mt" style="left:120.50px;top:410.15px;font-size:14px;color:#000;letter-spacing:-0.282px;">Geschiedenis</div>
<svg style="left:97px;top:410px" width="16" height="16"><path d="M0.6,10.2 A7.2,7.2 0 1 0 3.1,2.6 L0.9,5" fill="none" stroke="#000" stroke-width="1.05"/>
<path d="M0.5,2.2 V5.5 H4" fill="none" stroke="#000" stroke-width="1.1"/><path d="M0,5.8 L0,3.5 L2.3,5.8 Z" fill="#000"/>
<path d="M7.5,4.2 V8.5 L10.8,11.7" fill="none" stroke="#000" stroke-width="1"/></svg>
<div class="mt" style="left:120.50px;top:440.15px;font-size:14px;color:#000;letter-spacing:-0.038px;">Downloads</div>
<svg style="left:97px;top:440px" width="16" height="16"><path d="M7.5,0 V13.2 M3.2,9 L7.5,13.3 L11.8,9 M3,15.5 H12" fill="none" stroke="#000" stroke-width="1"/></svg>
<div class="mt" style="left:120.40px;top:470.15px;font-size:14px;color:#000;letter-spacing:0.194px;">Notities toevoegen</div>
<svg style="left:97px;top:470px" width="16" height="16"><path d="M1.2,15.6 L1.6,11.9 L7.6,1.3 Q8.6,-0.2 9.7,0.8 Q10.4,1.7 9.6,2.8 L3.8,13.6 Z" fill="none" stroke="#000" stroke-width="1"/>
<path d="M2.8,7.2 L5.2,2.6 L7.2,2.9" fill="none" stroke="#000" stroke-width="1"/>
<path d="M4.9,15.6 Q7,13 9,13 Q11,13 12.5,14.8 Q14.5,16.2 15.8,14.4" fill="none" stroke="#000" stroke-width="1"/></svg>
<svg style="left:70px;top:474px" width="14" height="10"><path d="M0.8,4.6 L4.6,8.4 L12.6,0.6" fill="none" stroke="#333" stroke-width="1.1"/></svg>
<div class="mt" style="left:120.40px;top:500.15px;font-size:14px;color:#000;letter-spacing:-0.075px;">Deze pagina delen</div>
<svg style="left:97px;top:500px" width="16" height="16"><path d="M0.5,4 V13.5 H11.5 V11.5" fill="none" stroke="#000" stroke-width="1.1"/>
<path d="M10.5,0.5 L15.2,5.3 L10.5,10 V7.6 Q6,7.4 3.6,10.2 Q4.6,3.5 10.5,3 Z" fill="none" stroke="#000" stroke-width="1" stroke-linejoin="miter"/></svg>
<svg style="left:70px;top:504px" width="14" height="10"><path d="M0.8,4.6 L4.6,8.4 L12.6,0.6" fill="none" stroke="#333" stroke-width="1.1"/></svg>
<div class="mt" style="left:120.30px;top:539.15px;font-size:14px;color:#000;letter-spacing:-0.203px;">Extensies weergeven of verbergen</div>
<svg style="left:97px;top:539px" width="16" height="16"><path d="M5.5,3.7 H8.7 V2.2 A1.4,1.4 0 0 1 11.5,2.2 V3.7 H14.2 V6.4 A1.4,1.4 0 0 0 14.2,9.2 V12.3 H11.5 V13.6 A1.4,1.4 0 0 1 8.7,13.6 V12.3 H5.5 V9.2 H4.2 A1.4,1.4 0 0 1 4.2,6.4 H5.5 Z" fill="none" stroke="#000" stroke-width="1.05"/></svg>
</body></html>
